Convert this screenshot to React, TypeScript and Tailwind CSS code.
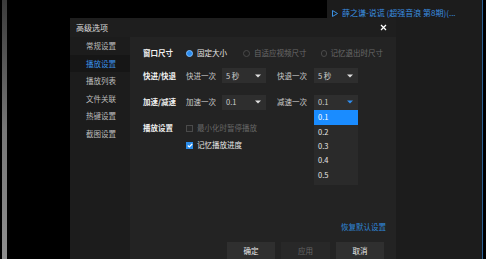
import type { ReactNode } from "react";

const font = { fontFamily: '"Noto Sans CJK SC", "Noto Sans", sans-serif' };

function Arrow({ blue }: { blue?: boolean }) {
  return (
    <svg width="6" height="4" viewBox="0 0 6 4" className={blue ? "text-[#2f8ef0]" : "text-[#e0e0e0]"}>
      <path d="M0 0.5H6L3 3.5Z" fill="currentColor" />
    </svg>
  );
}

function Select({ value, open }: { value: string; open?: boolean }) {
  return (
    <div className="relative w-[44px] h-[15px] bg-[#2e2e2e] flex items-center justify-between pl-[4px] pr-[5px] text-[#cfcfcf]">
      <span>{value}</span>
      <Arrow blue={open} />
      {open && (
        <div className="absolute left-0 top-[15px] w-[44px] bg-[#2a2a2a] pb-[3px] z-10">
          {["0.1", "0.2", "0.3", "0.4", "0.5"].map((v, i) => (
            <div
              key={v}
              className={
                i === 0
                  ? "h-[15px] pl-[4px] flex items-center bg-[#1a8cff] text-white"
                  : "h-[14.3px] pl-[4px] flex items-center text-[#e6e6e6]"
              }
            >
              {v}
            </div>
          ))}
        </div>
      )}
    </div>
  );
}

function Radio({ checked, children, w }: { checked?: boolean; children: ReactNode; w: string }) {
  return (
    <div className={`flex items-center gap-[4px] whitespace-nowrap ${w}`}>
      {checked ? (
        <span className="w-[7px] h-[7px] rounded-full bg-[#2a8cf0] border border-[#7fbfff]" />
      ) : (
        <span className="w-[7px] h-[7px] rounded-full border border-[#4a4a4a]" />
      )}
      <span className={checked ? "text-[#e8e8e8]" : "text-[#6a6a6a]"}>{children}</span>
    </div>
  );
}

function Check({ checked, children }: { checked?: boolean; children: ReactNode }) {
  return (
    <div className="flex items-center gap-[4px]">
      {checked ? (
        <span className="w-[7px] h-[7px] bg-[#2a8be8] flex items-center justify-center">
          <svg width="6" height="5" viewBox="0 0 6 5">
            <path d="M0.8 2.5L2.3 4L5.2 1" stroke="white" strokeWidth="1.1" fill="none" />
          </svg>
        </span>
      ) : (
        <span className="w-[7px] h-[7px] border border-[#4a4a4a] bg-[#262626]" />
      )}
      <span className={checked ? "text-[#e8e8e8]" : "text-[#666]"}>{children}</span>
    </div>
  );
}

const menu = ["常规设置", "播放设置", "播放列表", "文件关联", "热键设置", "截图设置"];

export default function App() {
  return (
    <div className="relative w-[486px] h-[259px] bg-black overflow-hidden text-[7.5px] leading-none" style={font}>
      <div className="absolute left-[2px] top-0 w-[5px] h-full bg-gradient-to-b from-[#555] via-[#aaa] to-[#ccc] opacity-70" />

      <div className="absolute left-[327px] top-0 w-[156px] h-full bg-[#1c1c1c] border-r border-[#2c5f93]">
        <div className="flex items-center gap-[4px] pl-[5px] pt-[9px] text-[#3a8fe0] text-[8px] whitespace-nowrap">
          <svg width="6" height="7" viewBox="0 0 6 7">
            <path d="M0.5 0.5L5.5 3.5L0.5 6.5Z" fill="none" stroke="#3a8fe0" strokeWidth="1" />
          </svg>
          <span>薛之谦-说谎 (超强音浪 第8期)(...</span>
        </div>
      </div>

      <div className="absolute left-[70px] top-[18px] w-[326px] h-[250px] flex flex-col bg-[#1e1e1e]">
        <div className="h-[19px] flex items-center justify-between pl-[6px] pr-[9px] text-[#dcdcdc] text-[8px]">
          <span>高级选项</span>
          <svg width="7" height="7" viewBox="0 0 7 7">
            <path d="M1 1L6 6M6 1L1 6" stroke="white" strokeWidth="1.3" />
          </svg>
        </div>
        <div className="flex flex-1">
          <div className="w-[60px] bg-[#1c1c1c]">
            {menu.map((m, i) => (
              <div
                key={m}
                className={
                  i === 1
                    ? "h-[17.6px] flex items-center pl-[16px] bg-[#161616] text-[#3a8fe8]"
                    : "h-[17.6px] flex items-center pl-[16px] text-[#bdbdbd]"
                }
              >
                {m}
              </div>
            ))}
          </div>
          <div className="flex-1 bg-[#232323] pl-[13px] pr-[10px] flex flex-col">
            <div className="flex items-center h-[16px] mt-[8px]">
              <span className="w-[43px] font-bold text-[#f0f0f0]">窗口尺寸</span>
              <Radio checked w="w-[57px]">固定大小</Radio>
              <Radio w="w-[78px]">自适应视频尺寸</Radio>
              <Radio w="w-[62px]">记忆退出时尺寸</Radio>
            </div>
            <div className="flex items-center h-[15px] mt-[7px]">
              <span className="w-[43px] font-bold text-[#f0f0f0]">快进/快退</span>
              <span className="w-[36px] text-[#c8c8c8]">快进一次</span>
              <Select value="5 秒" />
              <span className="w-[37px] ml-[11px] text-[#c8c8c8]">快退一次</span>
              <Select value="5 秒" />
            </div>
            <div className="flex items-center h-[14px] mt-[12px]">
              <span className="w-[43px] font-bold text-[#f0f0f0]">加速/减速</span>
              <span className="w-[36px] text-[#c8c8c8]">加速一次</span>
              <Select value="0.1" />
              <span className="w-[37px] ml-[11px] text-[#c8c8c8]">减速一次</span>
              <Select value="0.1" open />
            </div>
            <div className="flex items-center h-[16px] mt-[11px]">
              <span className="w-[43px] font-bold text-[#f0f0f0]">播放设置</span>
              <Check>最小化时暂停播放</Check>
            </div>
            <div className="flex items-center h-[16px] mt-[1px] pl-[43px]">
              <Check checked>记忆播放进度</Check>
            </div>
            <div className="flex justify-end mt-[70px] text-[#2f86d8]">
              <span>恢复默认设置</span>
            </div>
            <div className="flex justify-end gap-[6px] mt-[11px] mr-[2px]">
              <button className="w-[48px] h-[18px] bg-[#2f2f2f] text-[#eaeaea]">确定</button>
              <button className="w-[49px] h-[18px] bg-[#282828] text-[#666]">应用</button>
              <button className="w-[48px] h-[18px] bg-[#2f2f2f] text-[#eaeaea]">取消</button>
            </div>
          </div>
        </div>
      </div>
    </div>
  );
}
